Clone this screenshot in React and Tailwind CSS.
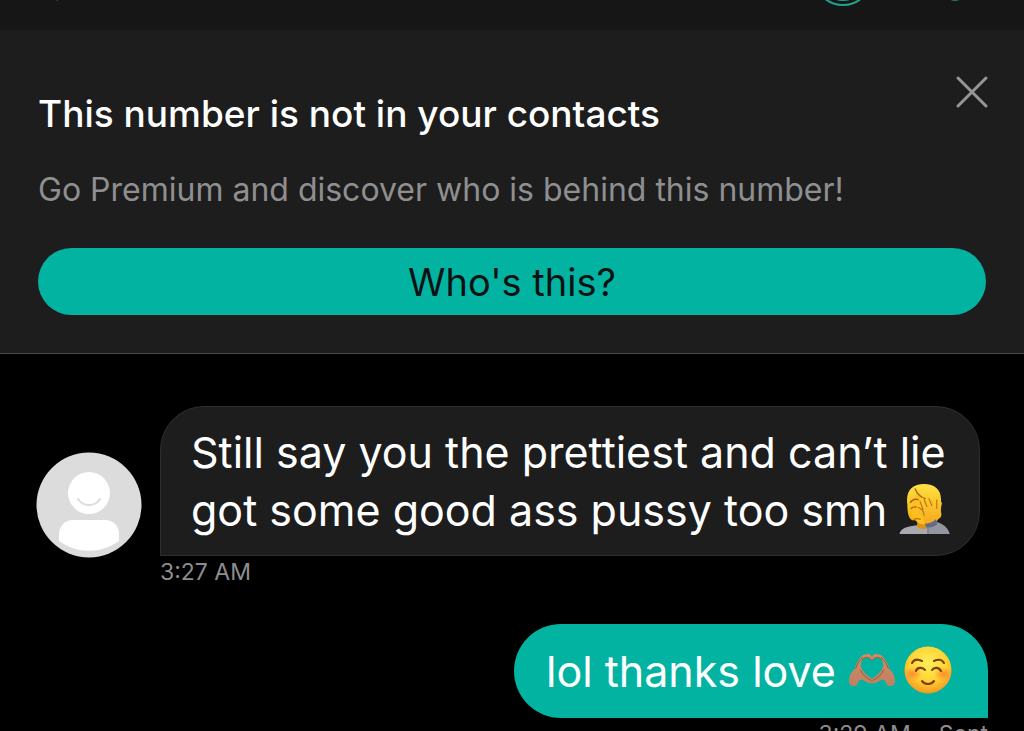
import React, { useState } from 'react';

function FacepalmEmoji() {
  return (
    <svg role="img" aria-label="person facepalming" className="inline-block size-[52px] align-[-9px]" viewBox="1 0 52 53" fill="none">
      <defs>
        <linearGradient id="fpHair" x1="0" y1="0" x2="0" y2="1">
          <stop offset="0" stopColor="#ffe047" />
          <stop offset="1" stopColor="#f3b20e" />
        </linearGradient>
        <linearGradient id="fpHand" x1="0" y1="0" x2="0" y2="1">
          <stop offset="0" stopColor="#ffcf35" />
          <stop offset="1" stopColor="#f6a81f" />
        </linearGradient>
      </defs>
      <path d="M1 52c1-6 8-8 18-9h16c10 1 16 4 17 9z" fill="#a9aab0" />
      <path d="M19 38v6c3 4 9 4 12 0v-6z" fill="#dc9412" />
      <path d="M9 22C7 8 14 1 26 1s19 7 17 20c-1 8 2 10 0 14l-4 3H14c-4-2-5-9-5-16z" fill="url(#fpHair)" />
      <path d="M13 19c3-1 4-4 5-8 5 4 13 5 21 8l-1 13c-3 7-7 10-13 10-7 0-12-8-12-15z" fill="#fec021" />
      <path d="M17 6c2 5 5 8 10 10M12 20c2-3 5-4 8-3M13 26c2-2 4-2 6-1" stroke="#a8620f" strokeWidth="1.4" strokeLinecap="round" />
      <path d="M16 37c2-1 4-1 6 0" stroke="#b66b12" strokeWidth="1.3" strokeLinecap="round" />
      <path d="M27 41c-1-5-4-8-7-11-2-2-3-5-1-6s4 1 6 3l-3-9c-1-3 2-4 4-2l4 8-2-9c0-3 3-4 4-1l3 9v-7c1-3 4-2 4 1v9l2-6c1-2 4-1 3 2l-2 10c-1 4-3 6-4 10z" fill="url(#fpHand)" />
      <path d="M25 27l-3-8M29 24l-3-7M34 23l-3-7M39 26v-9M20 25c3 1 6 4 6 8" stroke="#b87410" strokeWidth="1.1" strokeLinecap="round" />
      <path d="M29 42l9-3c8 3 13 7 14 13H30z" fill="#94969f" />
      <path d="M27 41c4 1 8-1 11-4l2 4c-3 4-8 5-12 4z" fill="#626b88" />
      <path d="M30 45v7" stroke="#70727b" />
    </svg>
  );
}

function HeartHandsEmoji() {
  return (
    <svg role="img" aria-label="heart hands" className="inline-block h-9 w-12 align-[-1px]" viewBox="0 0 50 36" fill="none">
      <defs>
        <linearGradient id="hhSkin" x1="0" y1="0" x2="0" y2="1">
          <stop offset="0" stopColor="#d08c62" />
          <stop offset="1" stopColor="#c08062" />
        </linearGradient>
      </defs>
      <g id="heartHand">
        <path d="M1 30c0-6 2-9 6-13 1-5 3-9 7-13 2-2 4-3 5-2 2-2 5-1 6 3v3c-3-4-9-4-11 1-3 7 4 14 11 18v5c-4 0-7-2-10-4-4 0-4 3-6 6-3 2-8 0-8-4z" fill="url(#hhSkin)" />
        <path d="M8 16c2-5 4-8 7-11M15 7c3-3 7-3 10 1M13 18c2 5 6 8 11 11" stroke="#92593d" strokeWidth="1" strokeLinecap="round" />
      </g>
      <use href="#heartHand" transform="matrix(-1 0 0 1 50 0)" />
    </svg>
  );
}

function SmileEmoji() {
  return (
    <svg role="img" aria-label="smiling face" className="ml-2 inline-block size-12 align-[-7px]" viewBox="0 0 48 48" fill="none">
      <defs>
        <radialGradient id="smFace" cx=".5" cy=".35" r=".65">
          <stop offset="0" stopColor="#ffef5a" />
          <stop offset=".6" stopColor="#ffd334" />
          <stop offset="1" stopColor="#f3981f" />
        </radialGradient>
        <radialGradient id="smCheek">
          <stop offset="0" stopColor="#ff7a2d" stopOpacity=".8" />
          <stop offset="1" stopColor="#ff7a2d" stopOpacity="0" />
        </radialGradient>
      </defs>
      <circle cx="24" cy="24" r="23.5" fill="url(#smFace)" />
      <ellipse cx="9" cy="28" rx="9" ry="7" fill="url(#smCheek)" />
      <ellipse cx="39" cy="28" rx="9" ry="7" fill="url(#smCheek)" />
      <path d="M8 17c2-4 6-4 10-2M30 15c4-2 8-2 10 2M12 25c1-4 7-4 9-1M28 24c2-3 7-3 9 1M18 35c3 4 9 4 12 0" stroke="#79400f" strokeWidth="2.1" strokeLinecap="round" strokeLinejoin="round" />
    </svg>
  );
}

function Avatar() {
  return (
    <svg role="img" aria-label="Unknown contact" className="size-[106px] shrink-0" viewBox="0 0 106 106" fill="none">
      <circle cx="53" cy="53" r="52.5" fill="#dcdcdd" />
      <circle cx="53" cy="41" r="21" fill="#fff" />
      <path d="M42 47c5 8 17 8 22 0" stroke="#dcdcdd" strokeWidth="2" strokeLinecap="round" />
      <path d="M37 68h32c8 0 14 6 14 14v7c-18 13-42 13-60 0v-7c0-8 6-14 14-14z" fill="#fff" />
    </svg>
  );
}

function TopBar() {
  return (
    <header className="flex h-[30px] shrink-0 items-start justify-between bg-[#161616] pr-[50px] pl-[54px]">
      <svg className="h-2 w-3" viewBox="0 0 12 8" fill="none">
        <path d="M1-3L4 0" stroke="#4f9685" strokeWidth="2" />
      </svg>
      <div className="flex gap-[70px]">
        <svg className="h-2 w-14" viewBox="0 0 56 8" fill="none">
          <circle cx="27" cy="-24" r="29" stroke="#1fa58f" strokeWidth="2" />
          <circle cx="27" cy="-23" r="24" fill="#1fa58f" />
        </svg>
        <svg className="h-2 w-8" viewBox="0 0 32 8" fill="none">
          <circle cx="13" cy="-9" r="10" fill="#16806f" />
        </svg>
      </div>
    </header>
  );
}

function ContactBanner({ onClose }) {
  return (
    <section className="shrink-0 border-b border-[#4b4b4b] bg-[#1d1d1d] px-[38px] pt-11 pb-[38px]">
      <div className="flex items-start justify-between">
        <h1 className="pt-4 text-[37px] leading-[48px] font-medium text-white">
          This number is not in your contacts
        </h1>
        <button type="button" aria-label="Close" onClick={onClose} className="text-[#969696]">
          <svg className="size-9 overflow-visible" viewBox="0 0 36 36" fill="none" stroke="currentColor" strokeWidth="3" strokeLinecap="round">
            <path d="M8 4l28 28M36 4L8 32" />
          </svg>
        </button>
      </div>
      <p className="mt-7 text-[32px] leading-[48px] text-[#8f8f90]">
        Go Premium and discover who is behind this number!
      </p>
      <button type="button" className="mt-[34px] h-[67px] w-full rounded-full bg-[#03b3a1] text-[38px] leading-[48px] text-[#0b1211]">
        Who's this?
      </button>
    </section>
  );
}

function App() {
  const [showBanner, setShowBanner] = useState(true);

  return (
    <div className="flex h-screen flex-col overflow-hidden bg-black font-['Inter','Liberation_Sans',sans-serif]">
      <TopBar />
      {showBanner && <ContactBanner onClose={() => setShowBanner(false)} />}

      <main className="px-9 pt-[52px]">
        {/* Incoming */}
        <div className="flex items-start gap-[18px]">
          <div className="pt-[46px]">
            <Avatar />
          </div>
          <div className="min-w-0">
            <p className="rounded-[44px] rounded-bl-none border border-[#2e2e2e] bg-[#1d1d1d] py-4 pr-7 pl-[30px] text-[43px] leading-[58px] text-white">
              Still say you the prettiest and can’t lie
              <br />
              got some good ass pussy too smh <FacepalmEmoji />
            </p>
            <time className="block text-[23px] leading-8 text-[#8d8d8f]">3:27 AM</time>
          </div>
        </div>

        {/* Outgoing */}
        <div className="mt-9 flex flex-col items-end">
          <p className="rounded-[47px] rounded-br-none bg-[#03b3a1] py-[18px] pr-9 pl-8 text-[43px] leading-[58px] text-white">
            lol thanks love <HeartHandsEmoji />
            <SmileEmoji />
          </p>
          <div className="flex gap-7 text-[23px] leading-8 text-[#8d8d8f]">
            <time>3:29 AM</time>
            <span>Sent</span>
          </div>
        </div>
      </main>
    </div>
  );
}

export default App;
